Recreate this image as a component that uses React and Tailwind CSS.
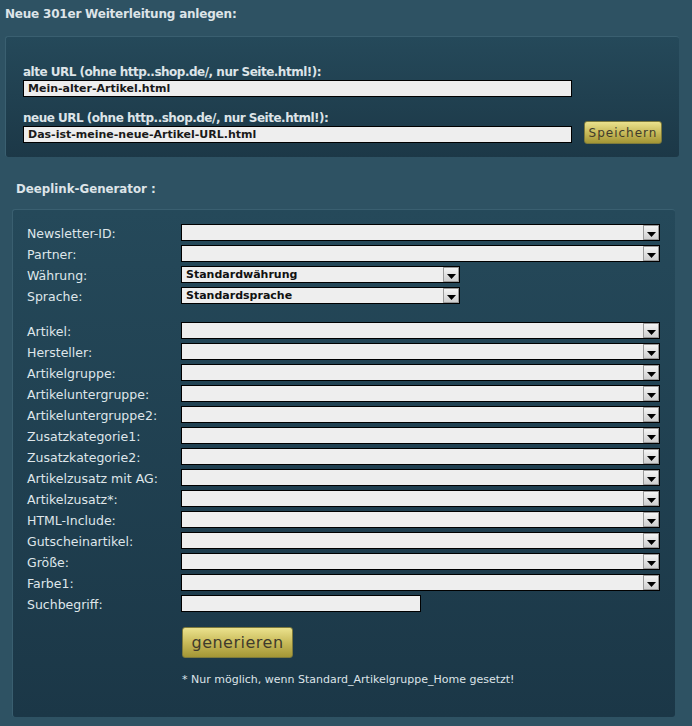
import React from "react";

const font = { fontFamily: '"DejaVu Sans", Verdana, sans-serif' };

function Select({ value = "", wide = true }) {
  return (
    <div
      className={`flex h-[17px] items-stretch border border-black bg-[#eeeeee] ${wide ? "w-[479px]" : "w-[279px]"}`}
    >
      <div className="flex-1 pl-[4px] text-[11px] font-bold leading-[15px] text-[#111]">{value}</div>
      <div className="relative m-[0px] w-[16px] border border-[#9a9a9a] bg-gradient-to-b from-[#f4f4f4] to-[#cfcfcf]">
        <svg className="absolute bottom-[2px] left-[3px]" width="9" height="5" viewBox="0 0 9 5">
          <path d="M0 0 H9 L4.5 5 Z" fill="#000" />
        </svg>
      </div>
    </div>
  );
}

function Row({ label, children }) {
  return (
    <div className="mb-[4px] flex h-[17px] items-center">
      <div className="w-[154px] pt-[1px] text-[12.5px] leading-[17px] text-[#dfe6ea]">{label}</div>
      {children}
    </div>
  );
}

const rows2 = [
  "Artikel:",
  "Hersteller:",
  "Artikelgruppe:",
  "Artikeluntergruppe:",
  "Artikeluntergruppe2:",
  "Zusatzkategorie1:",
  "Zusatzkategorie2:",
  "Artikelzusatz mit AG:",
  "Artikelzusatz*:",
  "HTML-Include:",
  "Gutscheinartikel:",
  "Größe:",
  "Farbe1:",
];

function GoldButton({ children, className }) {
  return (
    <div
      className={`flex items-center justify-center rounded-[3px] border border-[#7d7a3c] bg-gradient-to-b from-[#ebe28d] via-[#c9bb5a] to-[#a39635] ${className}`}
    >
      {children}
    </div>
  );
}

export default function App() {
  return (
    <div className="h-[726px] w-[692px] bg-[#2e5263] pt-[6px]" style={font}>
      <div className="pl-[5px] text-[12px] font-bold leading-[16px] tracking-[-0.2px] text-[#dde4e8]">
        Neue 301er Weiterleitung anlegen:
      </div>
      <div className="ml-[5px] mt-[14px] h-[121px] w-[674px] rounded-[3px] border-t border-l border-[#3a5f70] bg-gradient-to-b from-[#25495a] to-[#1c3847] pl-[17px] pt-[28px]">
        <div className="text-[12px] font-bold leading-[15px] tracking-[-0.5px] text-[#dde4e8]">
          alte URL (ohne http..shop.de/, nur Seite.html!):
        </div>
        <div className="h-[17px] w-[549px] border border-black bg-[#eeeeee] pl-[4px] text-[11px] font-bold leading-[15px] text-[#1a1a1a]">
          Mein-alter-Artikel.html
        </div>
        <div className="mt-[14px] flex items-end">
          <div>
            <div className="text-[12px] font-bold leading-[15px] tracking-[-0.5px] text-[#dde4e8]">
              neue URL (ohne http..shop.de/, nur Seite.html!):
            </div>
            <div className="h-[17px] w-[549px] border border-black bg-[#eeeeee] pl-[4px] text-[11px] font-bold leading-[15px] text-[#1a1a1a]">
              Das-ist-meine-neue-Artikel-URL.html
            </div>
          </div>
          <GoldButton className="mb-[-1px] ml-[12px] h-[23px] w-[78px]">
            <span className="text-[12px] tracking-[1px] text-[#3f3b2c]">Speichern</span>
          </GoldButton>
        </div>
      </div>
      <div className="mt-[24px] pl-[16px] text-[11.8px] font-bold leading-[16px] text-[#dde4e8]">
        Deeplink-Generator :
      </div>
      <div className="ml-[12px] mt-[12px] h-[508px] w-[663px] rounded-[3px] border-t border-l border-[#3a5f70] bg-gradient-to-b from-[#25495a] to-[#1b3747] pl-[14px] pt-[14px]">
        <Row label="Newsletter-ID:"><Select /></Row>
        <Row label="Partner:"><Select /></Row>
        <Row label="Währung:"><Select value="Standardwährung" wide={false} /></Row>
        <Row label="Sprache:"><Select value="Standardsprache" wide={false} /></Row>
        <div className="h-[14px]" />
        {rows2.map((r) => (
          <Row key={r} label={r}><Select /></Row>
        ))}
        <Row label="Suchbegriff:">
          <div className="h-[17px] w-[240px] border border-black bg-[#eeeeee]" />
        </Row>
        <div className="ml-[155px] mt-[15px]">
          <GoldButton className="h-[31px] w-[111px]">
            <span className="text-[16px] tracking-[0.5px] text-[#3f3b2c]">generieren</span>
          </GoldButton>
          <div className="mt-[15px] text-[11px] leading-[14px] text-[#dde4e8]">
            * Nur möglich, wenn Standard_Artikelgruppe_Home gesetzt!
          </div>
        </div>
      </div>
    </div>
  );
}
